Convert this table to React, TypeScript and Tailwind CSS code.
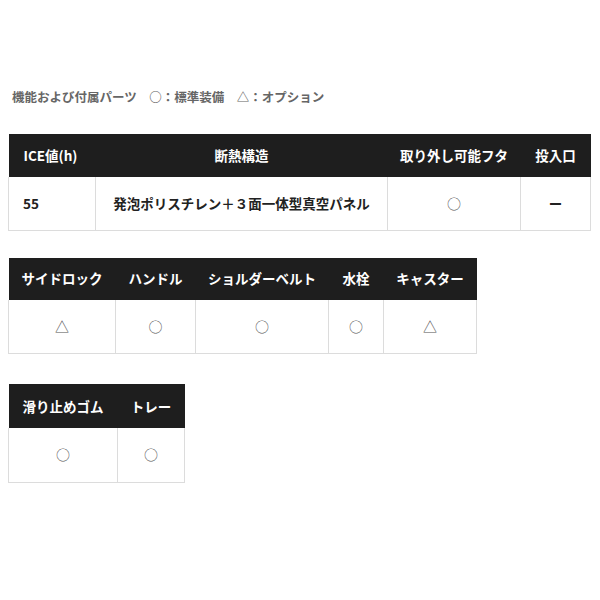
type Col = { label: string; w: string; align?: 'left' | 'center' };

function SpecTable({ cols, values, tableW, headH, bodyH, bodyBold }: { cols: Col[]; values: string[]; tableW: string; headH: string; bodyH: string; bodyBold?: boolean[] }) {
  return (
    <table className={`border-collapse table-fixed ml-[8px] ${tableW}`}>
      <thead>
        <tr className={`bg-[#1e1e1e] ${headH}`}>
          {cols.map((c) => (
            <th
              key={c.label}
              className={`p-0 text-[13.5px] font-bold text-white ${c.w} ${c.align === 'left' ? 'text-left pl-[15px]' : 'text-center'}`}
            >
              {c.label}
            </th>
          ))}
        </tr>
      </thead>
      <tbody>
        <tr className={bodyH}>
          {values.map((v, i) => (
            <td
              key={i}
              className={`p-0 border border-t-0 border-[#dcdcdc] ${cols[i].align === 'left' ? 'text-left pl-[14px]' : 'text-center'} ${
                bodyBold && bodyBold[i] ? 'text-[13.5px] font-bold text-[#222]' : 'text-[14px] font-normal text-[#555]'
              }`}
            >
              {v}
            </td>
          ))}
        </tr>
      </tbody>
    </table>
  );
}

export default function App() {
  return (
    <div className="w-[600px] h-[600px] bg-white font-['Noto_Sans_CJK_JP','Noto_Sans',sans-serif]">
      <div className="pt-[88px] pl-[12px] text-[12.5px] font-bold text-[#666] leading-[18px]">
        機能および付属パーツ　○：標準装備　△：オプション
      </div>

      <div className="mt-[28px]">
        <SpecTable
          tableW="w-[582px]"
          cols={[
            { label: 'ICE値(h)', w: 'w-[87px]', align: 'left' },
            { label: '断熱構造', w: 'w-[292px]' },
            { label: '取り外し可能フタ', w: 'w-[133px]' },
            { label: '投入口', w: 'w-[70px]' },
          ]}
          values={['55', '発泡ポリスチレン＋３面一体型真空パネル', '○', 'ー']}
          bodyBold={[true, true, false, true]}
          headH="h-[43px]"
          bodyH="h-[53px]"
        />
      </div>

      <div className="mt-[27px]">
        <SpecTable
          tableW="w-[468px]"
          cols={[
            { label: 'サイドロック', w: 'w-[107px]' },
            { label: 'ハンドル', w: 'w-[80px]' },
            { label: 'ショルダーベルト', w: 'w-[133px]' },
            { label: '水栓', w: 'w-[55px]' },
            { label: 'キャスター', w: 'w-[93px]' },
          ]}
          values={['△', '○', '○', '○', '△']}
          headH="h-[42px]"
          bodyH="h-[54px]"
        />
      </div>

      <div className="mt-[30px]">
        <SpecTable
          tableW="w-[176px]"
          cols={[
            { label: '滑り止めゴム', w: 'w-[109px]' },
            { label: 'トレー', w: 'w-[67px]' },
          ]}
          values={['○', '○']}
          headH="h-[44px]"
          bodyH="h-[54px]"
        />
      </div>
    </div>
  );
}
